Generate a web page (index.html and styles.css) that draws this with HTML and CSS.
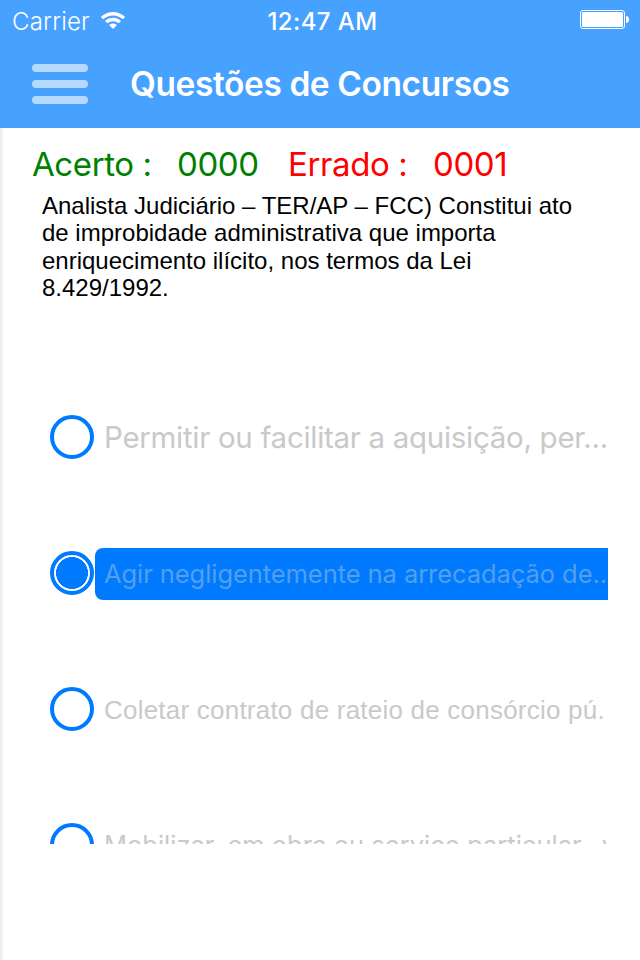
FILE: index.html
```
<!DOCTYPE html>
<html lang="pt-BR">
<head>
    <meta charset="UTF-8">
    <meta name="viewport" content="width=device-width, initial-scale=1.0">
    <title>Questões de Concursos</title>
    <link rel="stylesheet" href="styles.css">
</head>
<body>
    <header>
        <div class="status-bar">
            <div class="carrier">
                <span class="carrier-name">Carrier</span>
                <svg class="wifi" width="26" height="20" viewBox="0 0 26 20">
                    <path d="M.8 6.9C8 .2 18 .2 25.2 6.9L22.8 9.2C17 4.1 9 4.1 3.2 9.2Z" fill="#fff"/>
                    <path d="M5 11C9.7 6.7 16.3 6.7 21 11L18.6 13.3C15.2 10.4 10.8 10.4 7.4 13.3Z" fill="#fff"/>
                    <path d="M9 15C11.3 12.9 14.7 12.9 17 15L13 19Z" fill="#fff"/>
                </svg>
            </div>
            <span class="time">12:47 AM</span>
            <svg class="battery" width="50" height="20" viewBox="0 0 50 20">
                <rect x="0.5" y="0.5" width="44" height="18" rx="2.5" fill="none" stroke="#fff"/>
                <rect x="2" y="2" width="41" height="15" rx="1.5" fill="#fff"/>
                <path d="M46 6C48.2 6 49 7.2 49 9.5S48.2 13 46 13Z" fill="#fff"/>
            </svg>
        </div>
        <div class="nav-bar">
            <div class="menu">
                <span></span>
                <span></span>
                <span></span>
            </div>
            <h1>Questões de Concursos</h1>
        </div>
    </header>
    <main>
        <div class="score">
            <span class="right label">Acerto :</span>
            <span class="right number">0000</span>
            <span class="wrong label">Errado :</span>
            <span class="wrong number">0001</span>
        </div>
        <p class="question">Analista Judiciário – TER/AP – FCC) Constitui ato<br>de improbidade administrativa que importa<br>enriquecimento ilícito, nos termos da Lei<br>8.429/1992.</p>

        <!-- Answers, the list is cut off where it scrolls -->
        <div class="options">
            <div class="option">
                <span class="radio"></span>
                <span class="answer large">Permitir ou facilitar a aquisição, per...</span>
            </div>
            <div class="option selected">
                <span class="radio"></span>
                <span class="answer">Agir negligentemente na arrecadação de..</span>
            </div>
            <div class="option">
                <span class="radio"></span>
                <span class="answer plain">Coletar contrato de rateio de consórcio pú.</span>
            </div>
            <div class="option">
                <span class="radio"></span>
                <span class="answer last">Mobilizar, em obra ou serviço particular, &nbsp;v</span>
            </div>
        </div>
    </main>
</body>
</html>
```
FILE: styles.css
```
* {
    box-sizing: border-box;
}
body {
    font-family: Inter, sans-serif;
    margin: 0;
    height: 960px;
    background-color: white;
    overflow: hidden;
}
header {
    height: 128px;
    background-color: #46a1ff;
    color: white;
}
.status-bar {
    display: grid;
    grid-template-columns: 1fr auto 1fr;
    align-items: center;
    height: 40px;
    padding: 0 10px 0 12px;
    font-size: 24px;
}
.carrier {
    display: flex;
    align-items: center;
}
.carrier-name {
    width: 88px;
    padding-top: 2px;
    font-weight: 300;
    letter-spacing: 0.2px;
}
.time {
    padding: 2px 0 0 3px;
    font-weight: 500;
    letter-spacing: 0.4px;
}
.battery {
    justify-self: end;
}
.nav-bar {
    display: flex;
    align-items: center;
    height: 88px;
    padding: 0 32px;
}
.menu {
    display: flex;
    flex-direction: column;
    gap: 8px;
    width: 98px;
}
.menu span {
    width: 56px;
    height: 8px;
    border-radius: 4px;
    background: #b5d9ff;
}
h1 {
    margin: 0;
    font-size: 33.5px;
    font-weight: 600;
    letter-spacing: -0.42px;
    white-space: nowrap;
}
main {
    height: 832px;
    padding: 16px 32px 0;
    background: linear-gradient(to right, #e9e9e9, #fff 4px);
}
.score {
    display: flex;
    height: 40px;
    line-height: 41px;
    font-size: 33px;
    letter-spacing: -0.4px;
    white-space: nowrap;
}
.right {
    color: #008000;
}
.wrong {
    color: #ff0000;
}
.label {
    width: 145px;
}
.number {
    width: 111px;
}
.question {
    margin: 8px 0 0 10px;
    height: 180px;
    font-family: "Liberation Sans", Arial, sans-serif;
    font-size: 24px;
    line-height: 27.4px;
    white-space: nowrap;
}
.options {
    height: 472px;
    padding-left: 18px;
    overflow: hidden;
}
.option {
    display: flex;
    align-items: center;
    height: 52px;
    margin-top: 39px;
    margin-bottom: 84px;
}
.option + .option {
    margin-top: 0;
}
.radio {
    flex: none;
    width: 44px;
    height: 44px;
    margin-right: 1px;
    border: 4px solid #007aff;
    border-radius: 50%;
}
.selected .radio {
    background: radial-gradient(circle, #007aff 15.7px, white 16.2px);
}
.answer {
    flex: 1;
    height: 52px;
    margin-top: 2px;
    padding-left: 9px;
    border-radius: 8px 0 0 8px;
    line-height: 52px;
    font-size: 25.5px;
    letter-spacing: -0.07px;
    color: #c9c9c9;
    white-space: nowrap;
    overflow: hidden;
}
.large {
    line-height: 51px;
    font-size: 29.5px;
    letter-spacing: -0.3px;
}
.plain {
    font-family: "Liberation Sans", Arial, sans-serif;
    font-size: 26px;
    letter-spacing: 0.22px;
}
.last {
    margin-top: 0;
    letter-spacing: 0;
}
.selected .answer {
    line-height: 51px;
    background: #007aff;
    color: #549fed;
}
```
